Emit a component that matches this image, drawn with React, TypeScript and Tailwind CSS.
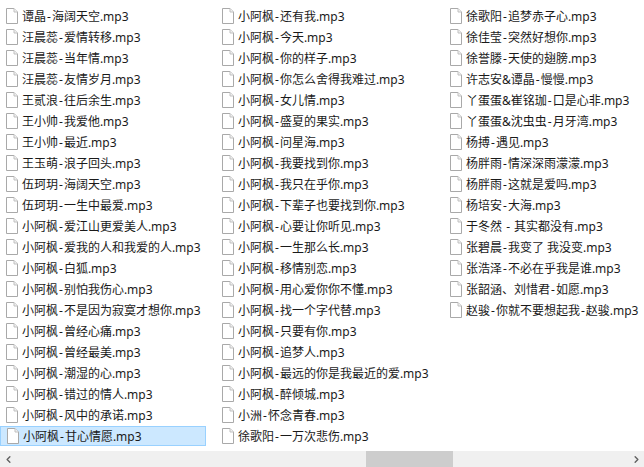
import { ChevronLeft, ChevronRight } from 'lucide-react'

// file list columns, same order as the explorer window
const columns: string[][] = [
  [
    '谭晶-海阔天空', '汪晨蕊-爱情转移', '汪晨蕊-当年情', '汪晨蕊-友情岁月', '王贰浪-往后余生', '王小帅-我爱他', '王小帅-最近',
    '王玉萌-浪子回头', '伍珂玥-海阔天空', '伍珂玥-一生中最爱', '小阿枫-爱江山更爱美人', '小阿枫-爱我的人和我爱的人', '小阿枫-白狐',
    '小阿枫-别怕我伤心', '小阿枫-不是因为寂寞才想你', '小阿枫-曾经心痛', '小阿枫-曾经最美', '小阿枫-潮湿的心', '小阿枫-错过的情人',
    '小阿枫-风中的承诺', '小阿枫-甘心情愿',
  ],
  [
    '小阿枫-还有我', '小阿枫-今天', '小阿枫-你的样子', '小阿枫-你怎么舍得我难过', '小阿枫-女儿情', '小阿枫-盛夏的果实', '小阿枫-问星海',
    '小阿枫-我要找到你', '小阿枫-我只在乎你', '小阿枫-下辈子也要找到你', '小阿枫-心要让你听见', '小阿枫-一生那么长', '小阿枫-移情别恋',
    '小阿枫-用心爱你你不懂', '小阿枫-找一个字代替', '小阿枫-只要有你', '小阿枫-追梦人', '小阿枫-最远的你是我最近的爱', '小阿枫-醉倾城',
    '小洲-怀念青春', '徐歌阳-一万次悲伤',
  ],
  [
    '徐歌阳-追梦赤子心', '徐佳莹-突然好想你', '徐誉滕-天使的翅膀', '许志安&谭晶-慢慢', '丫蛋蛋&崔铭珈-口是心非', '丫蛋蛋&沈虫虫-月牙湾', '杨搏-遇见',
    '杨胖雨-情深深雨濛濛', '杨胖雨-这就是爱吗', '杨培安-大海', '于冬然 - 其实都没有', '张碧晨-我变了 我没变', '张浩泽-不必在乎我是谁',
    '张韶涵、刘惜君-如愿', '赵骏-你就不要想起我-赵骏',
  ],
]

const columnWidths = ['w-[216px]', 'w-[228px]', 'w-[200px]']

function FileIcon() {
  return (
    <svg width="12" height="16" viewBox="0 0 12 16" className="shrink-0">
      <path d="M0.5 0.5H8L11.5 4V15.5H0.5Z" fill="#fff" stroke="#a9a9a9" />
      <path d="M8 0.5V4H11.5" fill="#f1f1f1" stroke="#c0c0c0" />
    </svg>
  )
}

// the hyphen sits wider in the reference font
function FileName({ name }: { name: string }) {
  const parts = name.split('-')
  return (
    <span className="whitespace-nowrap pt-[2px] text-[12px] leading-none text-[#1a1a1a]">
      {parts.map((part, i) => (
        <span key={i}>
          {i > 0 && <span className="mx-[1px]">-</span>}
          {part}
        </span>
      ))}
      .mp3
    </span>
  )
}

function FileRow({ name, selected }: { name: string; selected: boolean }) {
  return (
    <div
      className={`flex h-[20px] items-center gap-[4px] pl-[6px] ${
        selected ? 'w-[206px] border border-[#99d1ff] bg-[#cce8ff] pl-[5px]' : ''
      }`}
    >
      <FileIcon />
      <FileName name={name} />
    </div>
  )
}

export default function App() {
  return (
    <div className="flex h-[467px] w-[644px] flex-col overflow-hidden bg-white font-['Noto_Sans','Noto_Sans_CJK_SC',sans-serif]">
      {/* list */}
      <div className="flex h-[451px] pt-[6px]">
        {columns.map((files, c) => (
          <div key={c} className={`${columnWidths[c]} flex shrink-0 flex-col gap-[1px]`}>
            {files.map((name) => (
              <FileRow key={name} name={name} selected={name === '小阿枫-甘心情愿'} />
            ))}
          </div>
        ))}
      </div>

      {/* horizontal scrollbar */}
      <div className="flex h-[16px] items-center bg-[#f0f0f0]">
        <div className="flex w-[16px] justify-center">
          <ChevronLeft size={11} strokeWidth={3} className="text-[#606060]" />
        </div>
        <div className="ml-[350px] h-full w-[87px] bg-[#cdcdcd]" />
        <div className="ml-auto flex w-[16px] justify-center">
          <ChevronRight size={11} strokeWidth={3} className="text-[#606060]" />
        </div>
      </div>
    </div>
  )
}
